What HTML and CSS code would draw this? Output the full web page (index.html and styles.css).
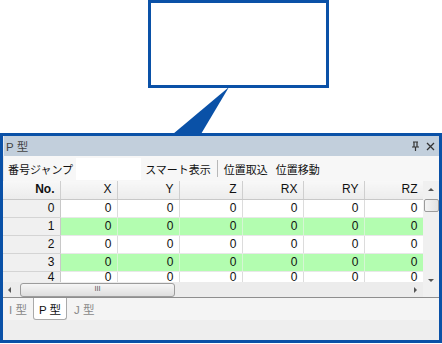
FILE: index.html
```html
<!DOCTYPE html>
<html lang="ja">
<head>
<meta charset="utf-8">
<link rel="stylesheet" href="styles.css">
</head>
<body>
<div class="callout"></div>
<svg class="pointer" width="442" height="47" viewBox="0 0 442 47"><polygon points="229,0 173,47 201,47" fill="#0a51a7"/></svg>
<div class="window">
  <div class="titlebar">
    <span class="title">P 型</span>
    <span class="tb-icons">
      <svg width="9" height="10" viewBox="0 0 9 10"><path d="M2 1h5M3 1v5M6 1v5M1 6h7M4.5 6v4" stroke="#333" stroke-width="1.2" fill="none"/></svg>
      <svg width="9" height="9" viewBox="0 0 9 9"><path d="M1 1l7 7M8 1l-7 7" stroke="#333" stroke-width="1.3"/></svg>
    </span>
  </div>
  <div class="toolbar">
    <span class="tl">番号ジャンプ</span>
    <span class="textbox"></span>
    <span class="tl">スマート表示</span>
    <span class="sep"></span>
    <span class="tl">位置取込</span>
    <span class="tl">位置移動</span>
  </div>
  <div class="gridwrap">
    <div class="grid">
      <table>
        <colgroup><col class="c0"><col class="c1"><col class="c2"><col class="c3"><col class="c4"><col class="c5"><col class="c6"></colgroup>
        <thead><tr><th class="rh">No.</th><th>X</th><th>Y</th><th>Z</th><th>RX</th><th>RY</th><th>RZ</th></tr></thead>
        <tbody>
          <tr><td class="rh">0</td><td>0</td><td>0</td><td>0</td><td>0</td><td>0</td><td>0</td></tr>
          <tr class="g"><td class="rh">1</td><td>0</td><td>0</td><td>0</td><td>0</td><td>0</td><td>0</td></tr>
          <tr><td class="rh">2</td><td>0</td><td>0</td><td>0</td><td>0</td><td>0</td><td>0</td></tr>
          <tr class="g"><td class="rh">3</td><td>0</td><td>0</td><td>0</td><td>0</td><td>0</td><td>0</td></tr>
          <tr class="last"><td class="rh">4</td><td>0</td><td>0</td><td>0</td><td>0</td><td>0</td><td>0</td></tr>
        </tbody>
      </table>
    </div>
    <div class="vscroll">
      <span class="arr up"></span>
      <span class="vthumb"></span>
      <span class="vfill"></span>
      <span class="arr down"></span>
    </div>
  </div>
  <div class="hscrollrow">
    <div class="hscroll">
      <span class="arr left"></span>
      <span class="hthumb"><span class="grip">III</span></span>
      <span class="hfill"></span>
      <span class="arr right"></span>
    </div>
    <div class="corner"></div>
  </div>
  <div class="tabs">
    <div class="tabrow">
      <span class="tab">I 型</span>
      <span class="tab sel">P 型</span>
      <span class="tab">J 型</span>
    </div>
  </div>
</div>
</body>
</html>
```
FILE: styles.css
```css
* { box-sizing: border-box; }
html, body { margin: 0; padding: 0; }
body {
  width: 442px;
  height: 344px;
  overflow: hidden;
  background: #fff;
  font-family: "Liberation Sans", "Noto Sans CJK JP", sans-serif;
  font-size: 12px;
  color: #222;
}
.callout {
  margin-left: 148px;
  width: 181px;
  height: 88px;
  border: 3px solid #0a51a7;
  background: #fff;
}
.pointer { display: block; margin-top: -1px; margin-bottom: -1px; }
.window {
  height: 210px;
  border: 3px solid #0a51a7;
  background: #f0f0f0;
  display: flex;
  flex-direction: column;
}
.titlebar {
  height: 20px;
  background: #c2cfdc;
  border-left: 1px solid #e4e8ee;
  display: flex;
  align-items: center;
  justify-content: space-between;
  padding: 0 4px 0 2px;
  color: #444;
}
.title { font-size: 11.5px; }
.tb-icons { display: flex; gap: 6px; align-items: center; }
.tb-icons svg { display: block; }
.toolbar {
  height: 25px;
  background: #f7f7f7;
  display: flex;
  align-items: center;
  padding-left: 4px;
  border-left: 1px solid #e6e6e6;
}
.tl { font-size: 11px; color: #111; white-space: nowrap; }
.textbox {
  width: 65px;
  height: 22px;
  background: #fff;
  margin: 0 4px 0 3px;
}
.sep {
  width: 1px;
  height: 17px;
  background: #b8b8b8;
  margin: 0 6px 0 6px;
}
.tl + .tl { margin-left: 8px; }
.gridwrap {
  height: 101px;
  display: flex;
  overflow: hidden;
}
.grid { width: 420px; overflow: hidden; background: #fff; }
table {
  border-collapse: collapse;
  table-layout: fixed;
  width: 420px;
}
col.c0 { width: 57px; }
col.c1 { width: 57px; }
col.c2 { width: 62px; }
col.c3 { width: 63px; }
col.c4 { width: 61px; }
col.c5 { width: 61px; }
col.c6 { width: 59px; }
th, td {
  height: 18px;
  padding: 0 5px 0 0;
  text-align: right;
  font-weight: normal;
  font-size: 12px;
  line-height: 17px;
  border-right: 1px solid #dcdcdc;
  border-bottom: 1px solid #e8e8e8;
  color: #111;
}
tr.last td { line-height: 11px; vertical-align: top; padding-top: 0; }
th {
  background: linear-gradient(#f8f8f8, #ececec);
  border-right: 1px solid #cfcfcf;
  border-bottom: 1px solid #c8c8c8;
}
th.rh { font-weight: bold; }
td.rh {
  background: #f0f0f0;
  border-right: 1px solid #c8c8c8;
  border-bottom: 1px solid #d4d4d4;
}
tr.g td { background: #b3fdb0; border-right-color: #d6f6d4; }
tr.g td.rh { background: #f0f0f0; border-right-color: #c8c8c8; }
.vscroll {
  width: 16px;
  display: flex;
  flex-direction: column;
  align-items: center;
  background: #f0f0f0;
}
.arr { display: block; width: 0; height: 0; border: 3px solid transparent; }
.arr.up { border-bottom: 3px solid #555; border-top-width: 0; margin: 7px 0 8px; }
.arr.down { border-top: 3px solid #555; border-bottom-width: 0; margin: 4px 0 0; }
.vthumb {
  width: 15px;
  height: 13px;
  border: 1px solid #9c9c9c;
  border-radius: 2px;
  background: linear-gradient(90deg, #f4f4f4, #e2e2e2);
}
.vfill { flex: 1; }
.hscrollrow { height: 15px; display: flex; }
.hscroll {
  width: 420px;
  display: flex;
  align-items: center;
  background: #ececec;
  padding: 0 6px 0 5px;
}
.arr.left { border-right: 3px solid #555; border-left-width: 0; margin-right: 9px; }
.arr.right { border-left: 3px solid #555; border-right-width: 0; }
.hthumb {
  width: 155px;
  height: 14px;
  border: 1px solid #9c9c9c;
  border-radius: 3px;
  background: linear-gradient(#f6f6f6, #dedede);
  display: flex;
  align-items: center;
  justify-content: center;
}
.grip { font-size: 7px; color: #555; font-family: "DejaVu Sans", sans-serif; line-height: 7px; }
.hfill { flex: 1; }
.corner { flex: 1; background: #f0f0f0; }
.tabs {
  flex: 1;
  border-top: 1px solid #8e8e8e;
  box-shadow: inset 0 1px 0 #dadada;
  background: #eeeeee;
}
.tabrow {
  height: 22px;
  background: #f4f4f4;
  display: flex;
  align-items: stretch;
  padding-left: 1px;
}
.tab {
  display: flex;
  align-items: center;
  padding: 0 5px;
  font-size: 11.5px;
  color: #888;
}
.tab.sel {
  color: #111;
  background: #fff;
  border: 1px solid #aaa;
  border-top: none;
  border-radius: 0 0 3px 3px;
  margin-left: 1px;
  margin-right: 2px;
}
```
